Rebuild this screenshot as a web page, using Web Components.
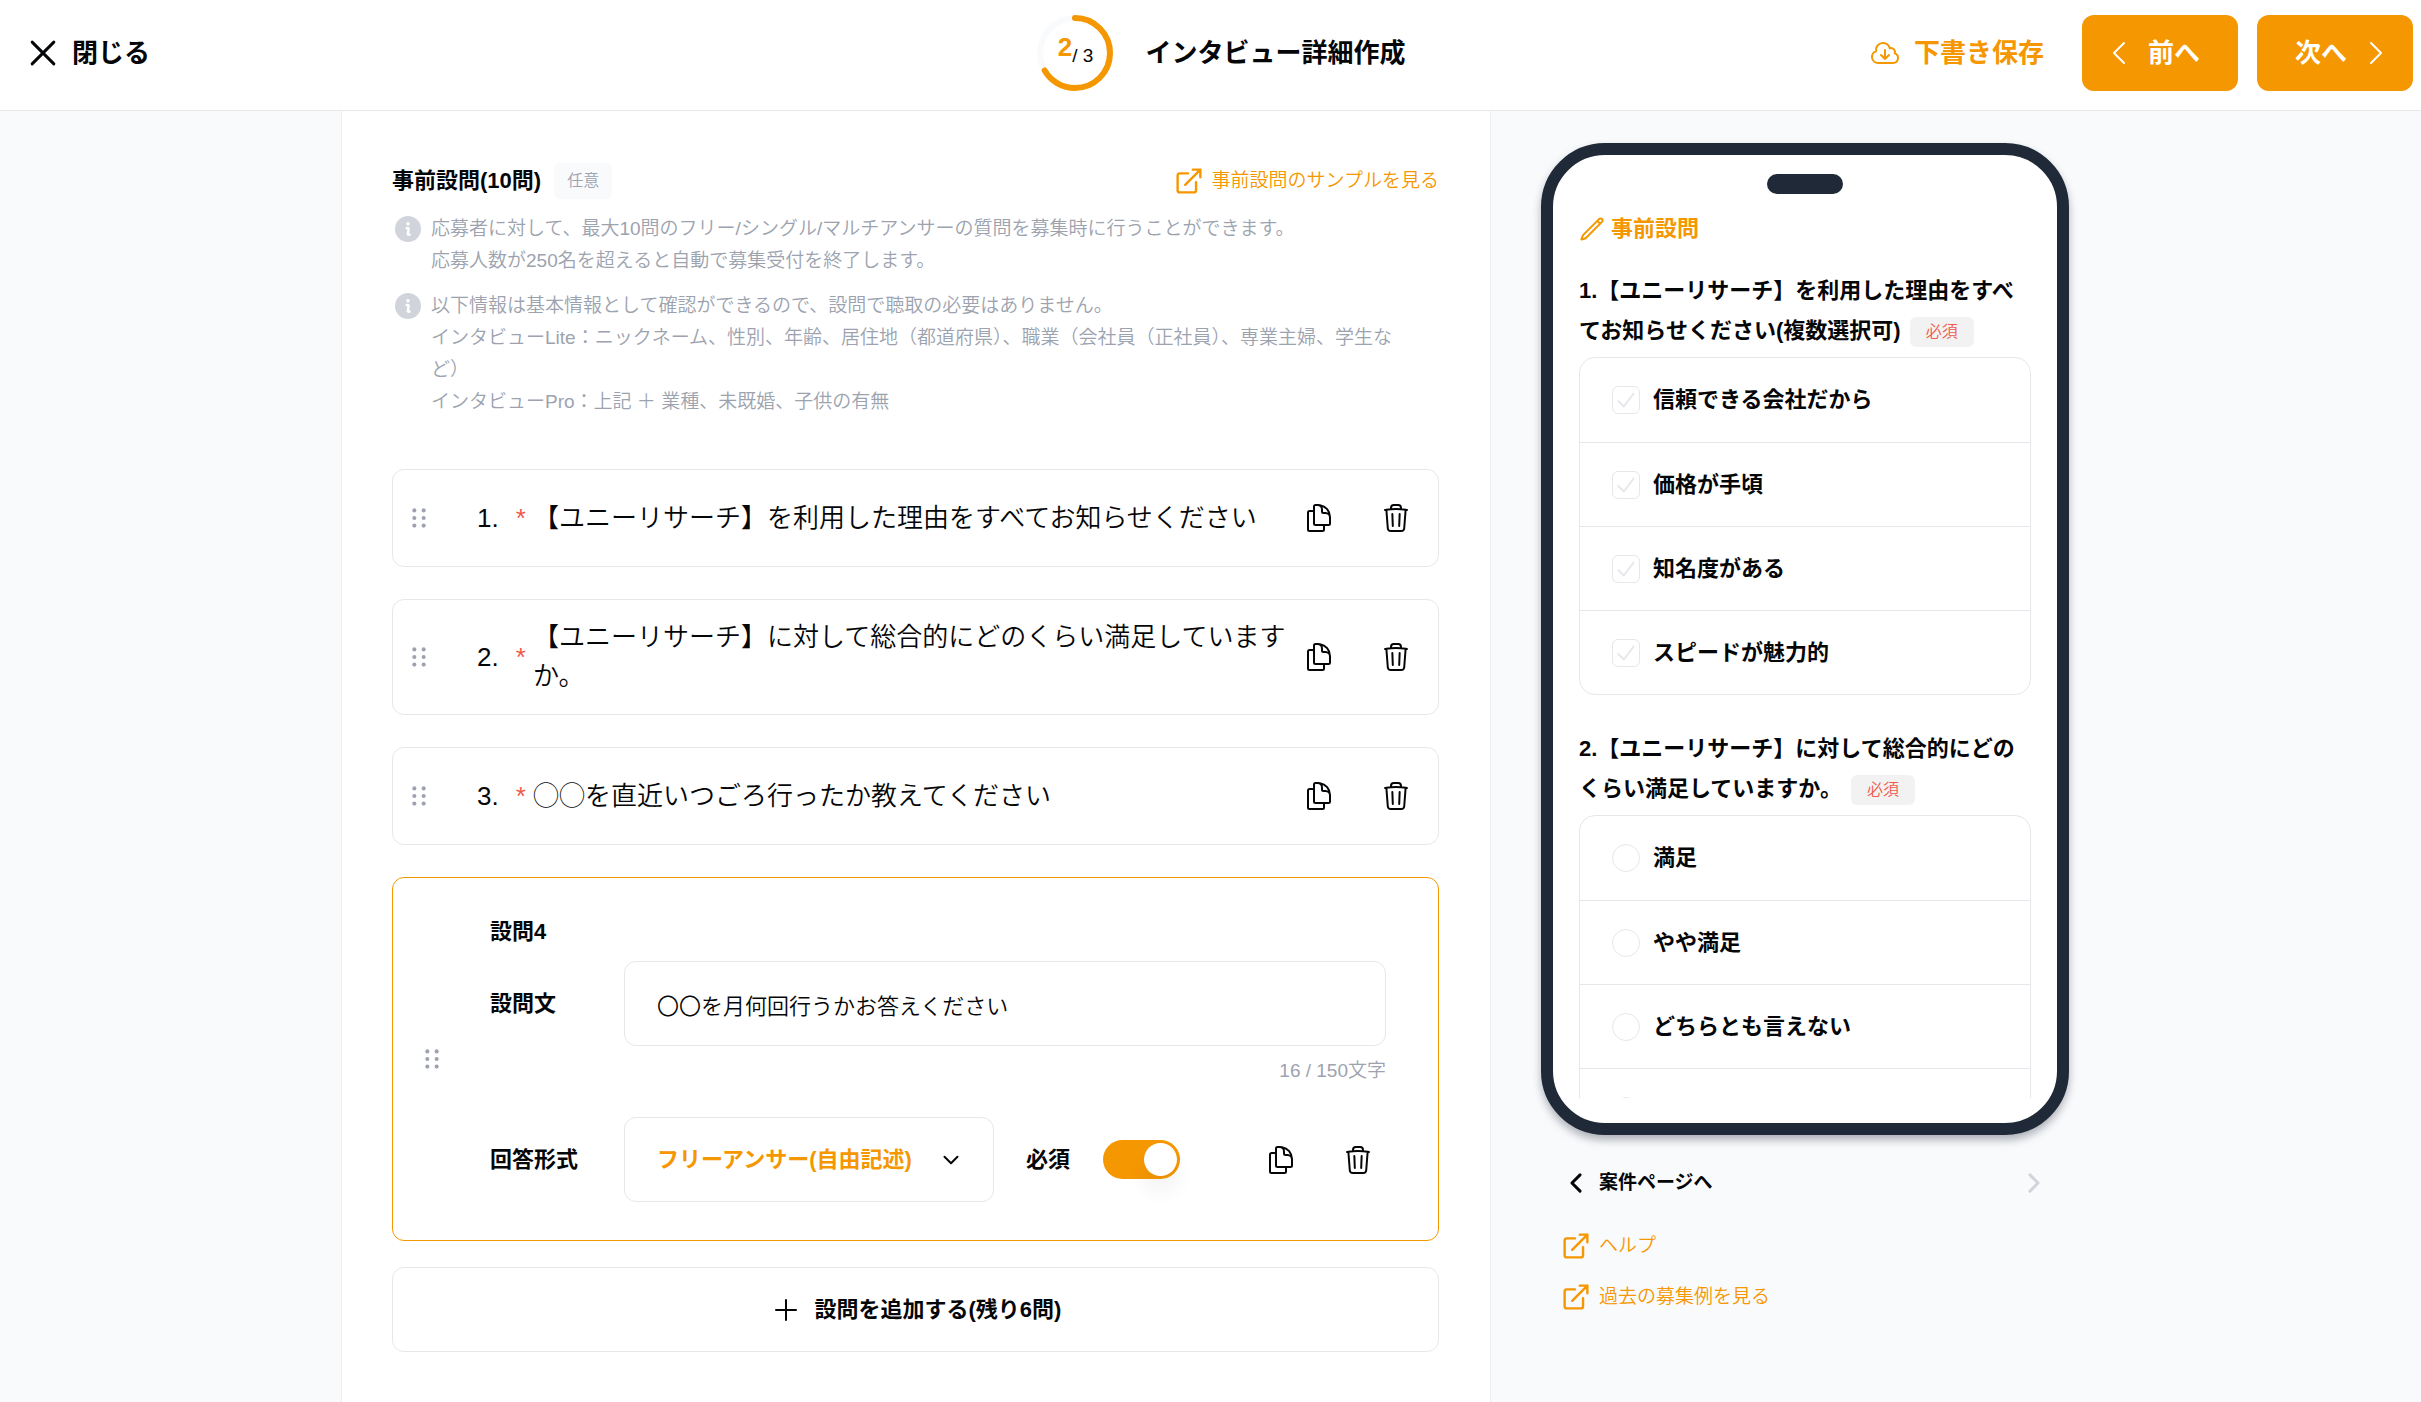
<!DOCTYPE html>
<html lang="ja">
<head>
<meta charset="utf-8">
<meta name="viewport" content="width=device-width, initial-scale=1">
<title>インタビュー詳細作成</title>
<style>
  :root {
    --ur-orange: #f59700;
    --ur-ink: #050608;
    --ur-muted: #9ca3af;
    --ur-faint: #d1d5db;
    --ur-line: #e5e7eb;
    --ur-red: #ef5a4c;
    --ur-navy: #1f2937;
    --ur-bg: #f9fafc;
    --ur-radius: 12px;
    --text-xs: 16px;
    --text-sm: 19px;
    --text-md: 22px;
    --text-lg: 26px;
  }

  body {
    background: var(--ur-bg);
    color: var(--ur-ink);
    font-family: "Liberation Sans", "Noto Sans CJK JP", sans-serif;
    font-size: var(--text-md);
    font-weight: 350;
    line-height: 32px;
    margin: 0;
  }
</style>
</head>
<body>
<interview-app></interview-app>

<script>
/* Shared by every shadow root */
const baseStyles = `
  *, *::before {
    box-sizing: border-box;
  }

  button, input, select {
    background: none;
    border: none;
    color: inherit;
    font: inherit;
    margin: 0;
    padding: 0;
  }

  button, select, input[type="checkbox"], input[type="radio"] {
    cursor: pointer;
  }

  h1, h2, p, ul {
    font: inherit;
    margin: 0;
    padding: 0;
  }

  a {
    color: inherit;
    text-decoration: none;
  }
`;

class BaseElement extends HTMLElement {
  connectedCallback() {
    if (this.shadowRoot) {
      return;
    }

    const template = document.createElement("template");
    template.innerHTML = `<style>${baseStyles}${this.styles}</style>${this.render()}`;

    this.attachShadow({ mode: "open" }).appendChild(
      template.content.cloneNode(true),
    );
  }

  get styles() {
    return ":host { display: block; }";
  }

  render() {
    return "<slot></slot>";
  }
}

const icons = {
  close: `<path d="M2 2l20 20M22 2L2 22"/>`,
  cloud: `<path d="M12 9.75v6.75m0 0l-3-3m3 3l3-3m-8.25 6a4.5 4.5 0 01-1.41-8.775 5.25 5.25 0 0110.233-2.33 3 3 0 013.758 3.848A3.752 3.752 0 0118 19.5H6.75z"/>`,
  left: `<path d="M15.75 19.5L8.25 12l7.5-7.5"/>`,
  right: `<path d="M8.25 4.5l7.5 7.5-7.5 7.5"/>`,
  down: `<path d="M6 9l6 6 6-6"/>`,
  plus: `<path d="M12 4.5v15M4.5 12h15"/>`,
  check: `<path d="M5 13l5 5 9-12"/>`,
  external: `<path d="M11 5H3.500A2 2 0 001.500 7v13.500a2 2 0 002 2h13a2 2 0 002-2V13M15.500 1.500h7v7M22.500 1.500L8.500 15.500" stroke-width="2.200"/>`,
  pencil: `<path d="M16.862 4.487l1.687-1.688a1.875 1.875 0 112.652 2.652L6.832 19.82a4.5 4.5 0 01-1.897 1.13l-2.685.8.8-2.685a4.5 4.5 0 011.13-1.897L16.863 4.487zm0 0L19.5 7.125"/>`,
  copy: `<path d="M15.75 17.25v3.375c0 .621-.504 1.125-1.125 1.125h-9.75a1.125 1.125 0 01-1.125-1.125V7.875c0-.621.504-1.125 1.125-1.125H6.75a9.06 9.06 0 011.5.124m7.5 10.376h3.375c.621 0 1.125-.504 1.125-1.125V11.25c0-4.46-3.243-8.161-7.5-8.876a9.06 9.06 0 00-1.5-.124H9.375c-.621 0-1.125.504-1.125 1.125v3.5m7.5 10.375H9.375a1.125 1.125 0 01-1.125-1.125v-9.25m12 6.625v-1.875a3.375 3.375 0 00-3.375-3.375h-1.5a1.125 1.125 0 01-1.125-1.125v-1.5a3.375 3.375 0 00-3.375-3.375H9.75"/>`,
  trash: `<path d="M14.74 9l-.346 9m-4.788 0L9.26 9m9.968-3.21c.342.052.682.107 1.022.166m-1.022-.165L18.16 19.673a2.25 2.25 0 01-2.244 2.077H8.084a2.25 2.25 0 01-2.244-2.077L4.772 5.79m14.456 0a48.108 48.108 0 00-3.478-.397m-12 .562c.34-.059.68-.114 1.022-.165m0 0a48.11 48.11 0 013.478-.397m7.5 0v-.916c0-1.18-.91-2.164-2.09-2.201a51.964 51.964 0 00-3.32 0c-1.18.037-2.09 1.022-2.09 2.201v.916m7.5 0a48.667 48.667 0 00-7.5 0"/>`,
  info: `
    <circle cx="12" cy="12" r="9.75" fill="currentColor" stroke="none"/>
    <circle cx="12" cy="8" r="1.300" fill="#fff" stroke="none"/>
    <path stroke="#fff" stroke-width="1.800" d="M11 11.300c1.200-.400 1.700.200 1.400 1.400l-.500 2.200c-.300 1.200.100 1.700 1.300 1.300"/>
  `,
  drag: `<g fill="currentColor" stroke="none">${[5, 12, 19]
    .map((y) => `<circle cx="7.700" cy="${y}" r="1.9"/><circle cx="16.300" cy="${y}" r="1.9"/>`)
    .join("")}</g>`,
};

/**
 * <ur-icon name="copy" size="32" weight="2">, weight is the stroke in pixels
 */
class UrIcon extends BaseElement {
  get styles() {
    const size = this.getAttribute("size") || 32;

    return `
      :host {
        display: block;
        flex: none;
        height: ${size}px;
        width: ${size}px;
      }

      svg {
        display: block;
        fill: none;
        height: 100%;
        stroke: currentColor;
        stroke-linecap: round;
        stroke-linejoin: round;
        stroke-width: ${((this.getAttribute("weight") || 2) * 24) / size};
        width: 100%;
      }
    `;
  }

  render() {
    return `<svg viewBox="0 0 24 24" aria-hidden="true">${icons[this.getAttribute("name")]}</svg>`;
  }
}

class StepProgress extends BaseElement {
  get styles() {
    return `
      :host {
        display: grid;
        place-items: center;
      }

      svg, p {
        grid-area: 1 / 1;
      }

      svg {
        fill: none;
        height: 76px;
        stroke-width: 6;
        width: 76px;
      }

      .track {
        stroke: var(--ur-bg);
      }

      .value {
        stroke: var(--ur-orange);
        stroke-linecap: round;
      }

      p {
        font-size: var(--text-sm);
      }

      b {
        color: var(--ur-orange);
        font-size: var(--text-lg);
        font-weight: bold;
        line-height: 1;
        vertical-align: 6px;
      }
    `;
  }

  render() {
    const step = this.getAttribute("step");
    const total = this.getAttribute("total");

    return `
      <svg viewBox="0 0 76 76" aria-hidden="true">
        <circle class="track" cx="38" cy="38" r="35"/>
        <circle class="value" cx="38" cy="38" r="35" pathLength="${total}"
          stroke-dasharray="${step} ${total}" transform="rotate(-90 38 38)"/>
      </svg>
      <p><b>${step}</b>/ ${total}</p>
    `;
  }
}

class AppHeader extends BaseElement {
  get styles() {
    return `
      :host {
        background: #fff;
        border-bottom: 1px solid var(--ur-line);
        display: block;
        font-size: var(--text-lg);
        font-weight: bold;
      }

      header {
        align-items: center;
        display: grid;
        grid-template-columns: 1fr auto 1fr;
        padding: 15px 8px 19px 30px;
      }

      button {
        align-items: center;
        display: flex;
        gap: 16px;
        white-space: nowrap;
      }

      .title {
        align-items: center;
        display: flex;
        gap: 32px;
      }

      step-progress {
        font-weight: normal;
      }

      .actions {
        display: flex;
        gap: 19px;
        justify-content: flex-end;
      }

      .draft {
        color: var(--ur-orange);
        gap: 13px;
        margin-right: 19px;
      }

      .nav {
        background: var(--ur-orange);
        border-radius: var(--ur-radius);
        color: #fff;
        gap: 13px;
        height: 76px;
        padding: 0 38px 0 21px;
      }

      .next {
        padding: 0 21px 0 38px;
      }
    `;
  }

  render() {
    return `
      <header>
        <button type="button"><ur-icon name="close" size="26" weight="3"></ur-icon>閉じる</button>
        <div class="title">
          <step-progress step="2" total="3"></step-progress>
          <h1>インタビュー詳細作成</h1>
        </div>
        <div class="actions">
          <button type="button" class="draft"><ur-icon name="cloud"></ur-icon>下書き保存</button>
          <button type="button" class="nav"><ur-icon name="left"></ur-icon>前へ</button>
          <button type="button" class="nav next">次へ<ur-icon name="right"></ur-icon></button>
        </div>
      </header>
    `;
  }
}

class ExternalLink extends BaseElement {
  get styles() {
    return `
      :host {
        color: var(--ur-orange);
        display: flex;
        font-size: var(--text-sm);
      }

      a {
        align-items: center;
        display: flex;
        gap: 10px;
      }
    `;
  }

  render() {
    return `
      <a href="${this.getAttribute("href") || "#"}">
        <ur-icon name="external" size="26"></ur-icon><slot></slot>
      </a>
    `;
  }
}

class InfoNote extends BaseElement {
  get styles() {
    return `
      :host {
        color: var(--ur-muted);
        display: flex;
        font-size: var(--text-sm);
        gap: 7px;
        padding-right: 16px;
      }

      ur-icon {
        color: var(--ur-faint);
      }
    `;
  }

  render() {
    return `<ur-icon name="info"></ur-icon><p><slot></slot></p>`;
  }
}

class RowActions extends BaseElement {
  get styles() {
    return `
      :host {
        display: flex;
        gap: 45px;
      }
    `;
  }

  render() {
    return `
      <button type="button" aria-label="複製"><ur-icon name="copy"></ur-icon></button>
      <button type="button" aria-label="削除"><ur-icon name="trash"></ur-icon></button>
    `;
  }
}

class QuestionCard extends BaseElement {
  get styles() {
    return `
      :host {
        align-items: center;
        border: 1px solid var(--ur-line);
        border-radius: var(--ur-radius);
        box-sizing: border-box;
        display: flex;
        font-size: var(--text-lg);
        line-height: 39px;
        min-height: 98px;
        padding: 18px 26px 18px 13px;
      }

      .handle {
        color: var(--ur-muted);
        cursor: grab;
        margin-right: 45px;
      }

      .number {
        margin-right: 17px;
      }

      .required {
        color: var(--ur-red);
        white-space: pre;
      }

      p {
        flex: 1;
        margin-right: 13px;
      }
    `;
  }

  render() {
    return `
      <button type="button" class="handle" aria-label="並べ替え"><ur-icon name="drag" size="26"></ur-icon></button>
      <span class="number">${this.getAttribute("number")}.</span>
      <span class="required">* </span>
      <p><slot></slot></p>
      <row-actions></row-actions>
    `;
  }
}

class QuestionEditor extends BaseElement {
  get styles() {
    return `
      :host {
        align-items: center;
        border: 1px solid var(--ur-orange);
        border-radius: var(--ur-radius);
        display: flex;
        gap: 45px;
        padding: 38px 52px 38px 26px;
      }

      .handle {
        color: var(--ur-muted);
        cursor: grab;
      }

      .form {
        flex: 1;
      }

      h2, label {
        font-weight: bold;
      }

      .field {
        align-items: center;
        display: grid;
        grid-template-columns: 134px 1fr;
      }

      h2 {
        margin-bottom: 13px;
      }

      .box {
        border: 1px solid var(--ur-line);
        border-radius: var(--ur-radius);
        height: 85px;
        padding: 0 32px;
      }

      input.box {
        font-family: "Noto Sans CJK JP", sans-serif;
      }

      .count {
        color: var(--ur-muted);
        font-size: var(--text-sm);
        margin: 9px 0 30px;
        text-align: right;
      }

      .controls {
        align-items: center;
        display: flex;
      }

      .select {
        align-items: center;
        color: var(--ur-orange);
        display: grid;
        font-weight: bold;
        margin-right: 32px;
        width: 370px;
      }

      .select > * {
        grid-area: 1 / 1;
      }

      select {
        appearance: none;
        width: 100%;
      }

      .select ur-icon {
        color: var(--ur-ink);
        justify-self: end;
        margin-right: 30px;
        pointer-events: none;
      }

      .switch {
        appearance: none;
        background: var(--ur-line);
        border-radius: 20px;
        height: 39px;
        margin-left: 33px;
        padding: 3px;
        width: 77px;
      }

      .switch::before {
        background: #fff;
        border-radius: 50%;
        box-shadow: 0 16px 20px rgba(31, 41, 55, 0.06);
        content: "";
        display: block;
        height: 33px;
        width: 33px;
      }

      .switch:checked {
        background: var(--ur-orange);
      }

      .switch:checked::before {
        margin-left: auto;
      }

      row-actions {
        margin-left: auto;
        padding-right: 12px;
      }
    `;
  }

  render() {
    return `
      <button type="button" class="handle" aria-label="並べ替え"><ur-icon name="drag" size="26"></ur-icon></button>
      <div class="form">
        <h2>設問4</h2>
        <div class="field">
          <label for="question">設問文</label>
          <input class="box" id="question" type="text" maxlength="150" value="〇〇を月何回行うかお答えください">
        </div>
        <p class="count">16 / 150文字</p>
        <div class="field">
          <label for="format">回答形式</label>
          <div class="controls">
            <div class="select">
              <select class="box" id="format">
                <option>フリーアンサー(自由記述)</option>
              </select>
              <ur-icon name="down" size="26"></ur-icon>
            </div>
            <label for="required">必須</label>
            <input class="switch" id="required" type="checkbox" role="switch" checked>
            <row-actions></row-actions>
          </div>
        </div>
      </div>
    `;
  }
}

class QuestionPanel extends BaseElement {
  get styles() {
    return `
      :host {
        background: #fff;
        border: 1px solid #eeeef2;
        border-width: 0 1px;
        display: block;
        padding: 52px 51px 48px 50px;
      }

      .heading {
        align-items: center;
        display: flex;
        gap: 13px;
        margin-bottom: 14px;
      }

      h2 {
        font-weight: bold;
      }

      .badge {
        background: var(--ur-bg);
        border-radius: 6px;
        color: var(--ur-muted);
        font-size: var(--text-xs);
        line-height: 36px;
        padding: 0 13px;
      }

      external-link {
        margin-left: auto;
      }

      .notes {
        display: grid;
        gap: 13px;
        margin-bottom: 51px;
      }

      .questions {
        display: grid;
        gap: 32px;
        margin-bottom: 26px;
      }

      .add {
        align-items: center;
        border: 1px solid var(--ur-line);
        border-radius: var(--ur-radius);
        display: flex;
        font-weight: bold;
        gap: 13px;
        height: 85px;
        justify-content: center;
        width: 100%;
      }
    `;
  }

  render() {
    return `
      <div class="heading">
        <h2>事前設問(10問)</h2>
        <span class="badge">任意</span>
        <external-link>事前設問のサンプルを見る</external-link>
      </div>
      <div class="notes">
        <info-note>応募者に対して、最大10問のフリー/シングル/マルチアンサーの質問を募集時に行うことができます。<br>応募人数が250名を超えると自動で募集受付を終了します。</info-note>
        <info-note>以下情報は基本情報として確認ができるので、設問で聴取の必要はありません。<br>インタビューLite：ニックネーム、性別、年齢、居住地（都道府県）、職業（会社員（正社員）、専業主婦、学生など）<br>インタビューPro：上記 ＋ 業種、未既婚、子供の有無</info-note>
      </div>
      <div class="questions">
        <question-card number="1">【ユニーリサーチ】を利用した理由をすべてお知らせください</question-card>
        <question-card number="2">【ユニーリサーチ】に対して総合的にどのくらい満足していますか。</question-card>
        <question-card number="3">◯◯を直近いつごろ行ったか教えてください</question-card>
        <question-editor></question-editor>
      </div>
      <button type="button" class="add"><ur-icon name="plus"></ur-icon>設問を追加する(残り6問)</button>
    `;
  }
}

/**
 * Answer list of one question in the preview, type is checkbox or radio
 */
class PreviewQuestion extends BaseElement {
  get styles() {
    return `
      :host {
        display: block;
        font-weight: bold;
      }

      .text {
        line-height: 40px;
        margin-bottom: 6px;
      }

      .badge {
        background: #f3f2f3;
        border-radius: 6px;
        color: var(--ur-red);
        display: inline-block;
        font-size: var(--text-xs);
        font-weight: 350;
        line-height: 30px;
        margin-left: 3px;
        padding: 0 16px;
        vertical-align: 1px;
      }

      ul {
        border: 1px solid var(--ur-line);
        border-radius: 16px;
        list-style: none;
      }

      li + li {
        border-top: 1px solid var(--ur-line);
      }

      li {
        align-items: center;
        display: flex;
        height: 84px;
        padding: 0 32px;
      }

      label {
        align-items: center;
        display: flex;
        gap: 13px;
      }

      .mark {
        color: var(--ur-line);
        display: grid;
        place-items: center;
      }

      .mark > * {
        grid-area: 1 / 1;
      }

      .mark ur-icon {
        pointer-events: none;
      }

      input {
        appearance: none;
        border: 1px solid var(--ur-line);
        border-radius: 6px;
        height: 28px;
        width: 28px;
      }

      input[type="radio"] {
        border-radius: 50%;
      }
    `;
  }

  render() {
    const type = this.getAttribute("type");
    const check =
      type === "checkbox" ? `<ur-icon name="check" size="26"></ur-icon>` : "";

    const items = this.getAttribute("options")
      .split(",")
      .map(
        (option) => `
          <li>
            <label><span class="mark"><input type="${type}" name="answer">${check}</span>${option}</label>
          </li>
        `,
      )
      .join("");

    return `
      <p class="text"><slot></slot> <span class="badge">必須</span></p>
      <ul>${items}</ul>
    `;
  }
}

class PhonePreview extends BaseElement {
  get styles() {
    return `
      :host {
        aspect-ratio: 528 / 992;
        background: #fff;
        border: 12px solid var(--ur-navy);
        border-radius: 64px;
        box-shadow: 0 5px 8px rgba(31, 41, 55, 0.35);
        box-sizing: border-box;
        display: flex;
        flex-direction: column;
        padding: 19px 26px 25px;
      }

      .notch {
        align-self: center;
        background: var(--ur-navy);
        border-radius: 10px;
        flex: none;
        height: 20px;
        margin-bottom: 19px;
        width: 76px;
      }

      .screen {
        flex: 1;
        min-height: 0;
        overflow: hidden;
      }

      h2 {
        align-items: center;
        color: var(--ur-orange);
        display: flex;
        font-weight: bold;
        gap: 6px;
        margin-bottom: 26px;
      }

      preview-question {
        margin-bottom: 34px;
      }
    `;
  }

  render() {
    return `
      <div class="notch"></div>
      <div class="screen">
        <h2><ur-icon name="pencil" size="26"></ur-icon>事前設問</h2>
        <preview-question type="checkbox" options="信頼できる会社だから,価格が手頃,知名度がある,スピードが魅力的">1.【ユニーリサーチ】を利用した理由をすべてお知らせください(複数選択可)</preview-question>
        <preview-question type="radio" options="満足,やや満足,どちらとも言えない,やや不満">2.【ユニーリサーチ】に対して総合的にどのくらい満足していますか。</preview-question>
      </div>
    `;
  }
}

class PreviewAside extends BaseElement {
  get styles() {
    return `
      :host {
        display: block;
        padding: 32px 11px 32px 50px;
      }

      nav {
        align-items: center;
        display: flex;
        justify-content: space-between;
        margin: 32px 22px 31px;
      }

      nav button {
        align-items: center;
        display: flex;
        font-size: var(--text-sm);
        font-weight: bold;
        gap: 10px;
      }

      nav button:disabled {
        color: var(--ur-faint);
        cursor: default;
      }

      .links {
        display: grid;
        gap: 19px;
        margin: 0 22px;
      }
    `;
  }

  render() {
    return `
      <phone-preview></phone-preview>
      <nav>
        <button type="button"><ur-icon name="left" size="26" weight="3"></ur-icon>案件ページへ</button>
        <button type="button" disabled aria-label="次のページ"><ur-icon name="right" size="26" weight="3"></ur-icon></button>
      </nav>
      <div class="links">
        <external-link>ヘルプ</external-link>
        <external-link>過去の募集例を見る</external-link>
      </div>
    `;
  }
}

class InterviewApp extends BaseElement {
  get styles() {
    return `
      :host {
        display: flex;
        flex-direction: column;
        min-height: 100vh;
      }

      main {
        display: grid;
        flex: 1;
        grid-template-columns: minmax(0, 1fr) 589px;
        margin: 0 auto;
        max-width: 1739px;
        width: 100%;
      }
    `;
  }

  render() {
    return `
      <app-header></app-header>
      <main>
        <question-panel></question-panel>
        <preview-aside></preview-aside>
      </main>
    `;
  }
}

customElements.define("ur-icon", UrIcon);
customElements.define("step-progress", StepProgress);
customElements.define("app-header", AppHeader);
customElements.define("external-link", ExternalLink);
customElements.define("info-note", InfoNote);
customElements.define("row-actions", RowActions);
customElements.define("question-card", QuestionCard);
customElements.define("question-editor", QuestionEditor);
customElements.define("question-panel", QuestionPanel);
customElements.define("preview-question", PreviewQuestion);
customElements.define("phone-preview", PhonePreview);
customElements.define("preview-aside", PreviewAside);
customElements.define("interview-app", InterviewApp);
</script>
</body>
</html>
